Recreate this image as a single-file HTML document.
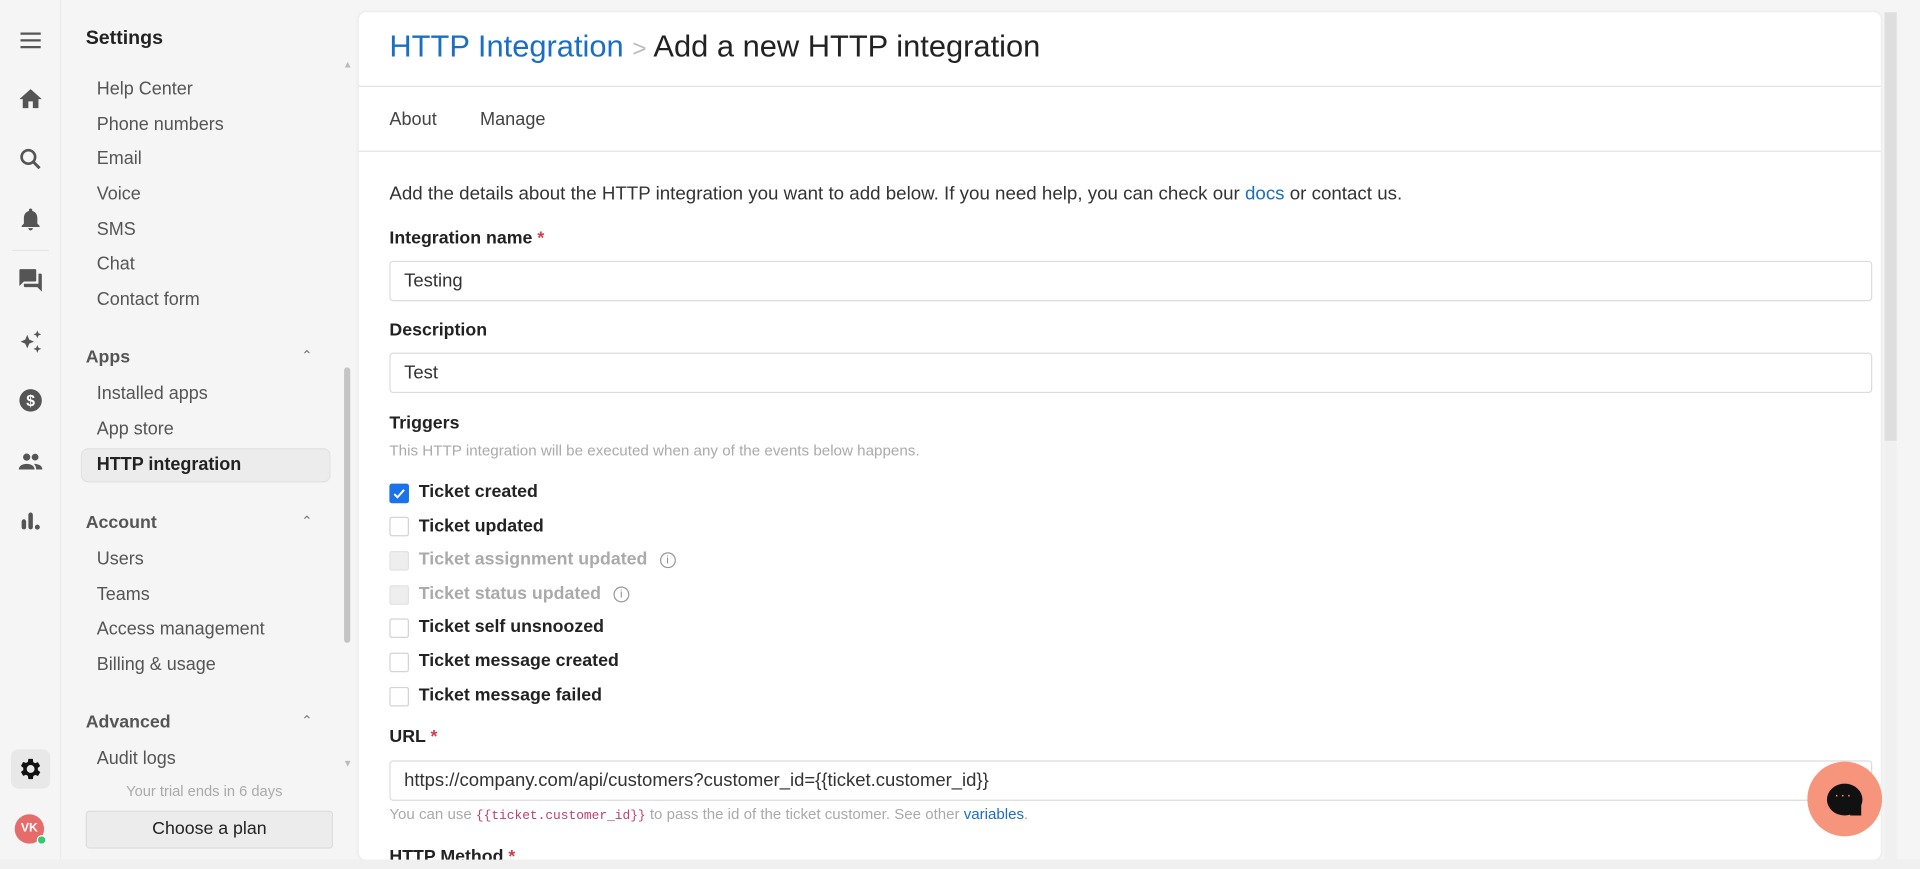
<!DOCTYPE html>
<html><head><meta charset="utf-8"><style>
*{box-sizing:border-box;margin:0;padding:0}
html,body{width:1920px;height:869px;overflow:hidden;background:#f5f5f5;font-family:"Liberation Sans",Arial,sans-serif}
#w{position:absolute;left:0;top:0;width:1568px;height:710px;transform:scale(1.22449);transform-origin:0 0;background:#f5f5f5}
.a{position:absolute;white-space:nowrap}
.rail{position:absolute;left:0;top:0;width:50px;height:710px;background:#f5f5f5;border-right:1px solid #ececec}
.ic{position:absolute;left:14px;width:22px;height:22px}
.si{position:absolute;left:79px;font-size:14.7px;color:#555}
.sh{position:absolute;left:70px;font-size:14.5px;color:#555;font-weight:bold}
.car{position:absolute;left:246px;font-size:11px;color:#777}
.card{position:absolute;left:293px;top:10px;width:1243px;height:692px;background:#fff;border-radius:6px;box-shadow:0 0 3px rgba(0,0,0,.08)}
.lbl{position:absolute;left:318px;font-size:14.5px;font-weight:bold;color:#222}
.inp{position:absolute;left:318px;width:1211px;height:33px;border:1px solid #dcdcdc;border-radius:3px;font-size:15.1px;color:#333;padding:0 11px;line-height:31px}
.cb{position:absolute;left:318px;width:16px;height:16px;border:1px solid #d4d4d4;border-radius:2px;background:#fff}
.cl{position:absolute;left:342px;font-size:14.5px;font-weight:bold;color:#222}
.req{color:#d23b4b}
</style></head><body><div id="w">
<div class="rail">
<svg class="ic" style="top:22px" viewBox="0 0 24 24"><path d="M3 6h18M3 12h18M3 18h18" stroke="#555" stroke-width="2"/></svg>
<svg class="ic" style="top:70px" viewBox="0 0 24 24"><path d="M10 20v-6h4v6h5v-8h3L12 3 2 12h3v8z" fill="#555"/></svg>
<svg class="ic" style="top:119px" viewBox="0 0 24 24"><circle cx="10" cy="10" r="6" fill="none" stroke="#555" stroke-width="2.4"/><path d="M14.5 14.5L20 20" stroke="#555" stroke-width="2.6"/></svg>
<svg class="ic" style="top:168px" viewBox="0 0 24 24"><path d="M12 22c1.1 0 2-.9 2-2h-4c0 1.1.9 2 2 2zm6-6v-5c0-3.1-1.6-5.6-4.5-6.3V4c0-.8-.7-1.5-1.5-1.5s-1.5.7-1.5 1.5v.7C7.6 5.4 6 7.9 6 11v5l-2 2v1h16v-1z" fill="#555"/></svg>
<div style="position:absolute;left:10px;top:204px;width:30px;border-top:1px solid #e6e6e6"></div>
<svg class="ic" style="top:218px" viewBox="0 0 24 24"><path d="M21 6h-2v9H6v2c0 .6.4 1 1 1h11l4 4V7c0-.6-.4-1-1-1zm-4 6V3c0-.6-.4-1-1-1H3c-.6 0-1 .4-1 1v14l4-4h10c.6 0 1-.4 1-1z" fill="#555"/></svg>
<svg class="ic" style="top:268px" viewBox="0 0 24 24"><path d="M9 6l1.8 4.2L15 12l-4.2 1.8L9 18l-1.8-4.2L3 12l4.2-1.8zM18 2l1 2.5L21.5 5.5 19 6.5 18 9 17 6.5 14.5 5.5 17 4.5zM18 15l1 2.5 2.5 1-2.5 1-1 2.5-1-2.5-2.5-1 2.5-1z" fill="#555"/></svg>
<svg class="ic" style="top:316px" viewBox="0 0 24 24"><circle cx="12" cy="12" r="10" fill="#555"/><text x="12" y="17" text-anchor="middle" font-size="14" font-weight="bold" fill="#fff" font-family="Liberation Sans">$</text></svg>
<svg class="ic" style="top:366px" viewBox="0 0 24 24"><circle cx="8.5" cy="8" r="3.2" fill="#555"/><circle cx="16" cy="8" r="3" fill="#555"/><path d="M1.5 19c0-3.5 3.5-5 7-5s7 1.5 7 5zM15 14c3 0 7.5 1 7.5 5h-5.5c0-2-.7-3.7-2-5z" fill="#555"/></svg>
<svg class="ic" style="top:414px" viewBox="0 0 24 24"><rect x="4" y="11" width="4" height="9" rx="2" fill="#555"/><rect x="10" y="5" width="4" height="15" rx="2" fill="#555"/><circle cx="18" cy="18" r="2.2" fill="#555"/></svg>
<div style="position:absolute;left:9px;top:612px;width:32px;height:32px;background:#e8e8e8;border-radius:6px"></div>
<svg class="ic" style="top:617px" viewBox="0 0 24 24"><path d="M19.4 13a7.5 7.5 0 000-2l2.1-1.6-2-3.5-2.5 1a7 7 0 00-1.7-1L15 3h-4l-.4 2.7a7 7 0 00-1.7 1l-2.5-1-2 3.5L6.5 11a7.5 7.5 0 000 2l-2.1 1.6 2 3.5 2.5-1c.5.4 1.1.7 1.700 1L11 21h4l.4-2.7c.6-.3 1.2-.6 1.7-1l2.5 1 2-3.5zM13 15.5a3.5 3.5 0 110-7 3.5 3.5 0 010 7z" fill="#111" transform="translate(-1 0)"/></svg>
<div style="position:absolute;left:12px;top:665px;width:24px;height:24px;border-radius:50%;background:#e66b6b;color:#fff;font-size:10px;font-weight:bold;text-align:center;line-height:24px">VK</div>
<div style="position:absolute;left:30px;top:682px;width:8px;height:8px;border-radius:50%;background:#2ecc71;border:1px solid #fff"></div>
</div>

<div class="a" style="left:70px;top:23px;font-size:16px;font-weight:bold;color:#222">Settings</div>
<div class="si" style="top:65px">Help Center</div>
<div class="si" style="top:94px">Phone numbers</div>
<div class="si" style="top:122px">Email</div>
<div class="si" style="top:151px">Voice</div>
<div class="si" style="top:180px">SMS</div>
<div class="si" style="top:208px">Chat</div>
<div class="si" style="top:237px">Contact form</div>
<div class="sh" style="top:284px">Apps</div><div class="car" style="top:284px">&#8963;</div>
<div class="si" style="top:314px">Installed apps</div>
<div class="si" style="top:343px">App store</div>
<div style="position:absolute;left:66px;top:366px;width:204px;height:28px;background:#ececec;border:1px solid #e2e2e2;border-radius:6px"></div>
<div class="si" style="top:372px;color:#222;font-weight:bold">HTTP integration</div>
<div class="sh" style="top:419px">Account</div><div class="car" style="top:419px">&#8963;</div>
<div class="si" style="top:449px">Users</div>
<div class="si" style="top:478px">Teams</div>
<div class="si" style="top:506px">Access management</div>
<div class="si" style="top:535px">Billing &amp; usage</div>
<div class="sh" style="top:582px">Advanced</div><div class="car" style="top:582px">&#8963;</div>
<div class="si" style="top:612px">Audit logs</div>
<div class="a" style="left:103px;top:639px;font-size:12px;color:#aaa">Your trial ends in 6 days</div>
<div style="position:absolute;left:70px;top:662px;width:202px;height:31px;background:#ececec;border:1px solid #ddd;border-radius:3px;text-align:center;line-height:29px;font-size:14.5px;color:#222">Choose a plan</div>
<div class="a" style="left:280px;top:48px;font-size:8px;color:#bbb">&#9650;</div>
<div class="a" style="left:280px;top:619px;font-size:8px;color:#bbb">&#9660;</div>
<div style="position:absolute;left:281px;top:300px;width:5px;height:225px;background:#c4c4c4;border-radius:3px"></div>

<div class="card"></div>
<div class="a" style="left:318px;top:24px;font-size:25.2px;color:#1a6fc4">HTTP Integration <span style="color:#bbb;font-size:20px">&gt;</span> <span style="color:#222">Add a new HTTP integration</span></div>
<div style="position:absolute;left:293px;top:70px;width:1243px;border-top:1px solid #e3e3e3"></div>
<div class="a" style="left:318px;top:90px;font-size:14.8px;color:#444">About</div>
<div class="a" style="left:392px;top:90px;font-size:14.8px;color:#444">Manage</div>
<div style="position:absolute;left:293px;top:123px;width:1243px;border-top:1px solid #e3e3e3"></div>
<div style="position:absolute;left:1539px;top:10px;width:10px;height:692px;background:#f0f0f0"></div>
<div style="position:absolute;left:1539px;top:10px;width:10px;height:350px;background:#dedede"></div>

<div class="a" style="left:318px;top:150px;font-size:15.3px;color:#333">Add the details about the HTTP integration you want to add below. If you need help, you can check our <span style="color:#1a6fc4">docs</span> or contact us.</div>
<div class="lbl" style="top:187px">Integration name <span class="req">*</span></div>
<div class="inp" style="top:213px">Testing</div>
<div class="lbl" style="top:262px">Description</div>
<div class="inp" style="top:288px">Test</div>
<div class="lbl" style="top:338px">Triggers</div>
<div class="a" style="left:318px;top:361px;font-size:12.4px;color:#aaa">This HTTP integration will be executed when any of the events below happens.</div>

<div class="cb" style="top:395px;background:#1a73e8;border-color:#1a73e8"><svg width="14" height="14" viewBox="0 0 14 14" style="position:absolute;left:0;top:0"><path d="M3 7.5l2.6 2.6L11 4" stroke="#fff" stroke-width="1.6" fill="none"/></svg></div>
<div class="cl" style="top:394px">Ticket created</div>
<div class="cb" style="top:422px"></div><div class="cl" style="top:422px">Ticket updated</div>
<div class="cb" style="top:450px;background:#eee;border-color:#e2e2e2"></div><div class="cl" style="top:449px;color:#aaa">Ticket assignment updated <span style="display:inline-block;width:13px;height:13px;border:1px solid #999;border-radius:50%;font-size:9px;line-height:11px;text-align:center;color:#888;margin-left:6px;vertical-align:1px;font-weight:normal">i</span></div>
<div class="cb" style="top:478px;background:#eee;border-color:#e2e2e2"></div><div class="cl" style="top:477px;color:#aaa">Ticket status updated <span style="display:inline-block;width:13px;height:13px;border:1px solid #999;border-radius:50%;font-size:9px;line-height:11px;text-align:center;color:#888;margin-left:6px;vertical-align:1px;font-weight:normal">i</span></div>
<div class="cb" style="top:505px"></div><div class="cl" style="top:504px">Ticket self unsnoozed</div>
<div class="cb" style="top:533px"></div><div class="cl" style="top:532px">Ticket message created</div>
<div class="cb" style="top:561px"></div><div class="cl" style="top:560px">Ticket message failed</div>
<div class="lbl" style="top:594px">URL <span class="req">*</span></div>
<div class="inp" style="top:621px">https://company.com/api/customers?customer_id={{ticket.customer_id}}</div>
<div class="a" style="left:318px;top:658px;font-size:12.3px;color:#aaa">You can use <span style="font-family:'Liberation Mono',monospace;color:#c0406a;font-size:10.5px">{{ticket.customer_id}}</span> to pass the id of the ticket customer. See other <span style="color:#1a6fc4">variables</span>.</div>
<div class="lbl" style="top:692px">HTTP Method <span class="req">*</span></div>
<div style="position:absolute;left:0;top:702px;width:1568px;height:8px;background:#f0f0f0"></div>

<div style="position:absolute;left:1476px;top:622px;width:61px;height:61px;border-radius:50%;background:#f7957c"></div>
<div style="position:absolute;left:1492px;top:640px;width:29px;height:26px;border-radius:50%;background:#111"></div>
<div style="position:absolute;left:1511px;top:657px;width:9px;height:9px;background:#111"></div>
<div class="a" style="left:1498px;top:642px;font-size:12px;color:#f7957c;letter-spacing:1px">&middot;&middot;&middot;</div>
</div></body></html>
